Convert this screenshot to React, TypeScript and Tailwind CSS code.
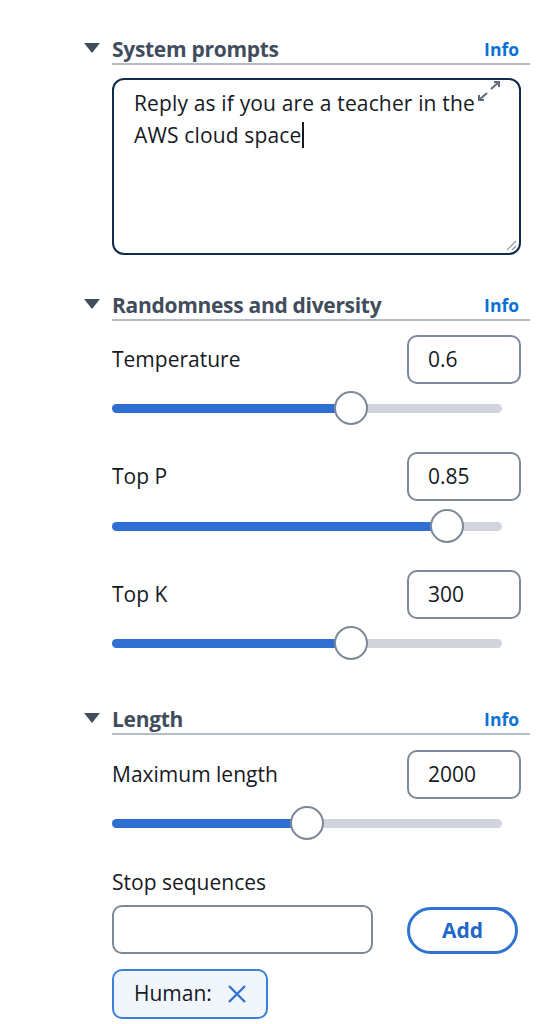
import React from "react";

const font = { fontFamily: '"Open Sans", "Noto Sans", Arial, sans-serif' };

function Header({ title }: { title: string }) {
  return (
    <div className="flex">
      <div className="w-[28px] flex items-center h-[28px]">
        <svg width="16" height="10" viewBox="0 0 16 10" className="mt-[-2px]">
          <polygon points="0,0 16,0 8,10" fill="#414d5c" />
        </svg>
      </div>
      <div className="flex-1 flex items-center justify-between h-[30px] border-b-2 border-[#b4bcc6] pb-[0px]">
        <span className="text-[21px] font-bold text-[#414d5c] leading-[28px] tracking-[-0.3px]">{title}</span>
        <span className="text-[17.5px] font-bold text-[#0972d3] mr-[11px] mt-[1px]">Info</span>
      </div>
    </div>
  );
}

function NumberRow({ label, value, mt }: { label: string; value: string; mt: string }) {
  return (
    <div className={`flex items-center justify-between pr-[9px] ${mt}`}>
      <span className="text-[21px] text-[#16191f]">{label}</span>
      <div className="w-[114px] h-[49px] border-2 border-[#7d8998] rounded-[10px] flex items-center pl-[19px] text-[21px] text-[#16191f]">
        {value}
      </div>
    </div>
  );
}

function Slider({ pct, mt }: { pct: number; mt: string }) {
  return (
    <div className={`relative w-[390px] h-[34px] flex items-center ${mt}`}>
      <div className="w-full h-[9px] rounded-full bg-[#d1d5db] overflow-hidden">
        <div className="h-full bg-[#2f6fd1]" style={{ width: `${pct}%` }} />
      </div>
      <div
        className="absolute top-0 w-[34px] h-[34px] rounded-full bg-white border-[2.5px] border-[#7d8998]"
        style={{ left: `calc(${pct}% - 17px)` }}
      />
    </div>
  );
}

export default function App() {
  return (
    <div className="w-[552px] h-[1024px] bg-white overflow-hidden pl-[84px] pr-[22px] pt-[35px]" style={font}>
      <Header title="System prompts" />
      <div className="pl-[28px]">
        <div className="relative mt-[13px] w-[409px] h-[177px] border-[2.5px] border-[#0f2b4d] rounded-[12px] pl-[20px] pr-[20px] pt-[7px] text-[21px] leading-[32px] text-[#16191f] whitespace-nowrap tracking-[0.15px]">
          <span>Reply as if you are a teacher in the</span>
          <br />
          <span>AWS cloud space</span>
          <span className="inline-block w-[1.5px] h-[26px] bg-[#16191f] align-middle ml-[1px] mt-[-4px]" />
          <svg className="absolute right-[18px] top-[1px]" width="24" height="22" viewBox="0 0 24 22">
            <path d="M14 8 L22 1" stroke="#5f6b7a" strokeWidth="2" />
            <path d="M17 1 L22 1 L22 6" stroke="#5f6b7a" strokeWidth="2" fill="none" />
            <path d="M10 12 L2 19" stroke="#5f6b7a" strokeWidth="2" />
            <path d="M2 14 L2 19 L7 19" stroke="#5f6b7a" strokeWidth="2" fill="none" />
          </svg>
          <svg className="absolute right-[2px] bottom-[2px]" width="12" height="12" viewBox="0 0 12 12">
            <path d="M11 2 L2 11 M11 7 L7 11" stroke="#8d99a8" strokeWidth="1.2" />
          </svg>
        </div>
      </div>

      <div className="mt-[36px]">
        <Header title="Randomness and diversity" />
      </div>
      <div className="pl-[28px]">
        <NumberRow label="Temperature" value="0.6" mt="mt-[14px]" />
        <Slider pct={61.3} mt="mt-[7px]" />
        <NumberRow label="Top P" value="0.85" mt="mt-[27px]" />
        <Slider pct={85.9} mt="mt-[8px]" />
        <NumberRow label="Top K" value="300" mt="mt-[27px]" />
        <Slider pct={61.3} mt="mt-[7px]" />
      </div>

      <div className="mt-[45px]">
        <Header title="Length" />
      </div>
      <div className="pl-[28px]">
        <NumberRow label="Maximum length" value="2000" mt="mt-[15px]" />
        <Slider pct={50} mt="mt-[7px]" />
        <div className="mt-[28px] text-[21px] leading-[28px] text-[#16191f]">Stop sequences</div>
        <div className="mt-[9px] flex items-center pr-[12px]">
          <div className="w-[261px] h-[49px] border-2 border-[#7d8998] rounded-[10px]" />
          <div className="ml-auto w-[111px] h-[47px] mt-[2px] rounded-full border-[3px] border-[#2f74d0] flex items-center justify-center text-[21px] font-bold text-[#1f67c8]">
            Add
          </div>
        </div>
        <div className="mt-[15px] w-[156px] h-[50px] rounded-[10px] border-2 border-[#3b80d8] bg-[#f1f6fd] flex items-center pl-[20px] text-[21px] text-[#16191f]">
          <span>Human:</span>
          <svg className="ml-[14px]" width="22" height="22" viewBox="0 0 22 22">
            <path d="M3 3 L19 19 M19 3 L3 19" stroke="#2f74d0" strokeWidth="2.4" />
          </svg>
        </div>
      </div>
    </div>
  );
}
